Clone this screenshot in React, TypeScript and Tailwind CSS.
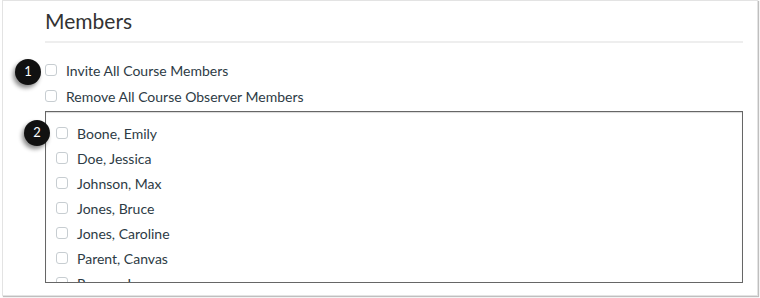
import React from "react";

const members = [
  "Boone, Emily",
  "Doe, Jessica",
  "Johnson, Max",
  "Jones, Bruce",
  "Jones, Caroline",
  "Parent, Canvas",
  "Rogers, Joe",
];

function Box() {
  return (
    <span className="inline-block w-[12px] h-[12px] shrink-0 rounded-[3px] border border-[#c7cdd1] bg-white" />
  );
}

function Badge({ n }: { n: number }) {
  return (
    <div className="flex w-[26px] h-[26px] items-center justify-center rounded-full bg-[#111] text-[13px] text-white shadow-[-2px_3px_4px_rgba(0,0,0,0.45)]">
      {n}
    </div>
  );
}

export default function App() {
  return (
    <div
      className="relative w-[760px] h-[298px] bg-white text-[#2d3b45]"
      style={{ fontFamily: "Lato, 'Liberation Sans', sans-serif" }}
    >
      <div className="ml-[2px] w-[756px] h-[296px] border border-[#e3e3e3] shadow-[1px_1px_1px_rgba(0,0,0,0.25)] pl-[42px] pr-[14px] pt-[4px] overflow-hidden">
        <h2 className="text-[21px] leading-[32px] text-[#333]">Members</h2>
        <div className="mt-[4px] h-[2px] bg-[#eeeeee]" />

        {/* top-level options */}
        <div className="mt-[18px] flex flex-col gap-[8px] text-[14px]">
          <label className="flex h-[18px] items-center gap-[9px]">
            <Box />
            Invite All Course Members
          </label>
          <label className="flex h-[18px] items-center gap-[9px]">
            <Box />
            Remove All Course Observer Members
          </label>
        </div>

        {/* member list */}
        <div className="mt-[6px] h-[172px] overflow-hidden border border-[#666] shadow-[inset_0_1px_1px_rgba(0,0,0,0.15)] pl-[10px] pt-[12px]">
          <div className="flex flex-col gap-[7px] text-[14px]">
            {members.map((m) => (
              <label key={m} className="flex h-[18px] items-center gap-[9px]">
                <Box />
                {m}
              </label>
            ))}
          </div>
        </div>
      </div>

      <div className="absolute left-[15px] top-[59px]">
        <Badge n={1} />
      </div>
      <div className="absolute left-[24px] top-[120px]">
        <Badge n={2} />
      </div>
    </div>
  );
}
